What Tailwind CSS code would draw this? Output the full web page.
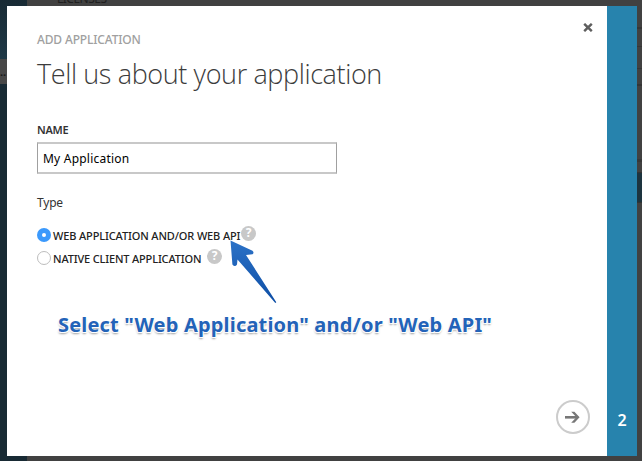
<!DOCTYPE html>
<html lang="en">
<head>
<meta charset="utf-8">
<title>Add application</title>
<script src="https://cdn.jsdelivr.net/npm/@tailwindcss/browser@4"></script>
</head>
<body class="relative h-[461px] w-[642px] overflow-hidden bg-[#414141] font-['Noto_Sans','Open_Sans',sans-serif] text-[#333]">
  <!-- Dimmed portal page behind the dialog -->
  <div class="flex h-full justify-between">
    <div class="flex">
      <div class="flex w-[27px] flex-col bg-[#182a34]">
        <div class="h-[59px] bg-linear-to-b from-[#182a34] to-[#1f3947]"></div>
        <div class="h-[25px] bg-[#474747] text-[11px] leading-[25px] font-bold text-[#181818]">..</div>
      </div>
      <div class="-mt-[9px] ml-[30px] text-[12px] leading-[16px] tracking-[-0.5px] text-[#202020]">LICENSES</div>
    </div>
    <div class="flex w-[5px] flex-col pt-[27px]">
      <div class="h-[2px] bg-[#363636]"></div>
      <div class="mt-[17px] h-px bg-[#363636]"></div>
      <div class="mt-[21px] h-px bg-[#363636]"></div>
      <div class="mt-[15px] h-[2px] bg-[#353535]"></div>
      <div class="mt-[73px] h-[3px] bg-[#383838]"></div>
      <div class="mt-[10px] h-[31px] border-y border-[#333] bg-[#1d343f]"></div>
    </div>
  </div>

  <!-- Dialog -->
  <main class="absolute top-[6px] left-[7px] flex h-[450px] w-[630px] bg-white">
    <section class="flex w-[600px] flex-col pr-[15px] pl-[30px]">
      <header class="flex h-[83px] justify-between pt-[15px]">
        <div>
          <p class="mt-[10px] text-[12px] leading-[18px] font-medium tracking-[-0.15px] whitespace-nowrap text-[#a0a0a0]">ADD APPLICATION</p>
          <h1 class="mt-[6px] font-['Open_Sans'] text-[27px] leading-[38px] font-light tracking-[-0.38px] whitespace-nowrap text-[#3c3c3c]">Tell us about your application</h1>
        </div>
        <button class="mt-[2px] h-[9px] w-[9px]" aria-label="Close">
          <svg class="block" width="10" height="9" viewBox="0 0 10 9" fill="none" stroke="#5e5e5e" stroke-width="2.4"><path d="M1.2 .8L8.8 8.2M8.8 .8L1.2 8.2"/></svg>
        </button>
      </header>

      <label class="mt-[33px] text-[11px] leading-[16px] font-semibold tracking-[-0.3px] text-[#333]" for="name">NAME</label>
      <input id="name" value="My Application" class="mt-[4px] h-[32px] w-[300px] border border-y-2 border-x-[#a0a0a0] border-y-[#c8c8c8] px-[5px] text-[12px] tracking-[0.22px] text-black outline-none">
      <p class="mt-[20px] text-[12px] leading-[18px] tracking-[-0.2px]">Type</p>

      <div class="mt-[12px] flex h-[22px] items-center text-[11px] font-medium whitespace-nowrap text-[#222]">
        <span class="flex h-[14px] w-[14px] items-center justify-center rounded-full bg-[#3b99fc]"><span class="h-[4px] w-[4px] rounded-full bg-white"></span></span>
        <span class="ml-[2px] w-[188px] pt-[2px] tracking-[-0.13px]">WEB APPLICATION AND/OR WEB API</span>
        <span class="-mt-[4px] flex h-[15px] w-[15px] items-center justify-center rounded-full bg-[#c8c8c8] text-[12px] leading-none font-bold text-white">?</span>
      </div>
      <div class="mt-[1px] flex h-[22px] items-center text-[11px] font-medium whitespace-nowrap text-[#222]">
        <span class="h-[14px] w-[14px] rounded-full border border-[#bdbdbd] bg-white"></span>
        <span class="ml-[2px] w-[154px] pt-[2px] tracking-[-0.16px]">NATIVE CLIENT APPLICATION</span>
        <span class="-mt-[4px] flex h-[15px] w-[15px] items-center justify-center rounded-full bg-[#c8c8c8] text-[12px] leading-none font-bold text-white">?</span>
      </div>

      <p class="mt-[41px] ml-[21px] text-[20px] leading-[30px] font-bold tracking-[0.18px] whitespace-nowrap text-[#2363b8] [text-shadow:0_0_1px_#fff,-1px_1px_1px_#fff,1px_1px_0_#fff,0_2px_2px_#999]">Select "Web Application" and/or "Web API"</p>

      <button class="mt-auto mr-[2px] mb-[22px] h-[34px] w-[34px] self-end" aria-label="Next">
        <svg class="block" width="34" height="34" viewBox="0 0 34 34" fill="none"><circle cx="17" cy="17" r="16" stroke="#ccc" stroke-width="2"/><path d="M9 17.3H22" stroke="#777" stroke-width="2.6"/><path d="M15.2 11.8H18.4L23.6 17.3L18.4 22.8H15.2L20.4 17.3Z" fill="#777"/></svg>
      </button>
    </section>
    <aside class="flex w-[30px] items-end justify-center bg-[#2783ad] pb-[24px] text-[16px] leading-[24px] font-semibold text-white">2</aside>
  </main>

  <!-- Callout arrow laid over the options -->
  <svg class="absolute top-[234px] left-[224px]" width="60" height="76" viewBox="224 234 60 76">
    <defs><linearGradient id="arrow" x1="0" y1="0" x2="0" y2="1"><stop stop-color="#2c72c7"/><stop offset="1" stop-color="#0d4ea5"/></linearGradient></defs>
    <path d="M230.5 240.5L252.5 250.7Q254.5 253 252.5 254.2L246 255L276.3 302.3L275.3 303L237.5 259.5L237 264.5Q235 267.5 232.4 264.5Z" fill="url(#arrow)"/>
  </svg>
</body>
</html>
